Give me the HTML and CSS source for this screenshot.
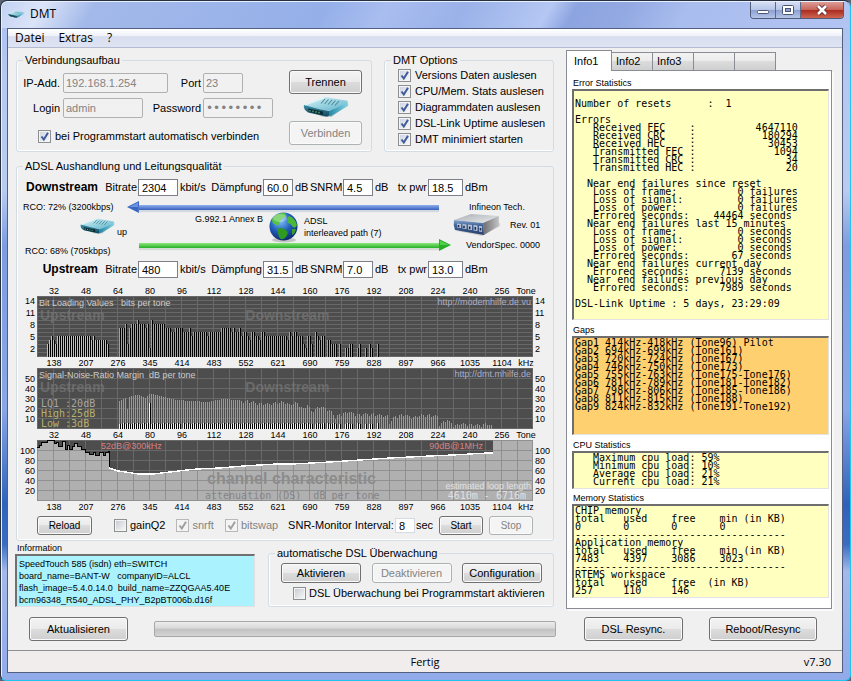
FILE: index.html
```html
<!DOCTYPE html>
<html lang="de">
<head>
<meta charset="utf-8">
<title>DMT</title>
<link rel="stylesheet" href="styles.css">
</head>
<body>
<svg class="defs" width="0" height="0" aria-hidden="true">
  <defs>
    <linearGradient id="teal-top" x1="0" y1="0" x2="1" y2="1"><stop offset="0" stop-color="#e2f7fb"/><stop offset=".5" stop-color="#9bd4e2"/><stop offset="1" stop-color="#5bb2ca"/></linearGradient>
    <linearGradient id="teal-front" x1="0" y1="0" x2="0" y2="1"><stop offset="0" stop-color="#3b8ba3"/><stop offset="1" stop-color="#0f4a5e"/></linearGradient>
    <linearGradient id="teal-side" x1="0" y1="0" x2="1" y2="0"><stop offset="0" stop-color="#2487a6"/><stop offset="1" stop-color="#8ad6e4"/></linearGradient>
    <linearGradient id="grey-top" x1="0" y1="0" x2="1" y2="1"><stop offset="0" stop-color="#a9adb2"/><stop offset="1" stop-color="#eceef0"/></linearGradient>
    <linearGradient id="grey-side" x1="0" y1="0" x2="1" y2="0"><stop offset="0" stop-color="#6d6d70"/><stop offset="1" stop-color="#c9c9cb"/></linearGradient>
    <linearGradient id="navy" x1="0" y1="0" x2="0" y2="1"><stop offset="0" stop-color="#8ea9cf"/><stop offset=".35" stop-color="#41649b"/><stop offset="1" stop-color="#27406c"/></linearGradient>
    <radialGradient id="sea" cx=".4" cy=".3" r=".75"><stop offset="0" stop-color="#7fc4f5"/><stop offset=".5" stop-color="#2360bd"/><stop offset="1" stop-color="#0b2568"/></radialGradient>
    <symbol id="router" viewBox="0 0 46 21">
      <path d="M3 13 20 20H29L45 7V5L28 18Z" fill="#000" opacity=".15"/>
      <path d="M1 8 20 0.5Q22 0 25 .4L43 3.5Q46 4 44 6L29 13Q27 14 24 13.500L2 10Z" fill="url(#teal-top)"/>
      <path d="M1 8Q0 10 2 13L5 15.500 23 19.500Q26 20 26 18V14Q14 12 1 8Z" fill="url(#teal-front)"/>
      <path d="M26 14Q28 13.500 44 5.500Q46 6 45 9L29 18.500Q26 20 26 18Z" fill="url(#teal-side)"/>
      <path d="M5 11.500 20 14.500V18L6 15Z" fill="#082c38"/>
      <path d="M7 13V14.500M10 13.600V15.200M13 14.200V15.800M16 14.800V16.400" stroke="#7fd08a" stroke-width="1"/>
      <path d="M22 2 18 6.500M25.500 2.500 21.500 7M29 3 25 7.500M32.500 3.500 28.500 8M36 4 32 8.500" stroke="#4f8796" stroke-width="1.100"/>
      <path d="M2 8 21 1" stroke="#f2ffff" stroke-width=".8"/>
    </symbol>
  </defs>
</svg>

<div class="window">
  <header class="titlebar">
    <svg class="title-icon" width="16" height="9"><use href="#router"/></svg>
    <span class="title-text">DMT</span>
    <div class="caption">
      <button type="button" class="cap" aria-label="Minimieren"><svg width="14" height="12" viewBox="0 0 14 12"><rect x="1.500" y="6.500" width="11" height="3" rx="1" fill="#fff" stroke="#4b5570"/></svg></button>
      <button type="button" class="cap" aria-label="Maximieren"><svg width="14" height="12" viewBox="0 0 14 12"><rect x="1.500" y="1.500" width="11" height="9" rx="1" fill="#fff" stroke="#4b5570"/><rect x="4.500" y="4.500" width="5" height="3" fill="#8ea4d4" stroke="#4b5570"/></svg></button>
      <button type="button" class="cap cap-close" aria-label="Schließen"><svg width="14" height="12" viewBox="0 0 14 12"><path d="M3 2 11 10M11 2 3 10" stroke="#5a2a30" stroke-width="4.500"/><path d="M3 2 11 10M11 2 3 10" stroke="#fff" stroke-width="2.600"/></svg></button>
    </div>
  </header>

  <div class="client">
    <nav class="menubar">
      <a href="#datei">Datei</a><a href="#extras">Extras</a><a href="#hilfe">?</a>
    </nav>

    <main class="workspace">
      <section class="left">
        <div class="top-groups">
          <fieldset class="group connect">
            <legend>Verbindungsaufbau</legend>
            <div class="connect-form">
              <div class="field-row"><label class="first" for="ip">IP-Add.</label><input class="text w-ip" id="ip" value="192.168.1.254" disabled><label class="second port" for="port">Port</label><input class="text w-port" id="port" value="23" disabled></div>
              <div class="field-row"><label class="first" for="login">Login</label><input class="text w-login" id="login" value="admin" disabled><label class="second" for="pw">Password</label><input class="text w-pw" id="pw" type="password" value="abcdefgh" disabled></div>
              <div class="auto-row"><input type="checkbox" id="auto" checked><label for="auto">bei Programmstart automatisch verbinden</label></div>
            </div>
            <div class="connect-actions">
              <button type="button" class="btn">Trennen</button>
              <svg width="46" height="21" aria-hidden="true"><use href="#router"/></svg>
              <button type="button" class="btn" disabled>Verbinden</button>
            </div>
          </fieldset>
          <fieldset class="group options">
            <legend>DMT Options</legend>
            <div><input type="checkbox" id="o1" checked><label for="o1">Versions Daten auslesen</label></div>
            <div><input type="checkbox" id="o2" checked><label for="o2">CPU/Mem. Stats auslesen</label></div>
            <div><input type="checkbox" id="o3" checked><label for="o3">Diagrammdaten auslesen</label></div>
            <div><input type="checkbox" id="o4" checked><label for="o4">DSL-Link Uptime auslesen</label></div>
            <div><input type="checkbox" id="o5" checked><label for="o5">DMT minimiert starten</label></div>
          </fieldset>
        </div>

        <fieldset class="group adsl">
          <legend>ADSL Aushandlung und Leitungsqualität</legend>
          <div class="rates">
            <b>Downstream</b><label for="dr">Bitrate</label><input id="dr" value="2304"><span>kbit/s</span><label for="da">Dämpfung</label><input id="da" value="60.0"><span>dB</span><label for="ds">SNRM</label><input id="ds" value="4.5"><span>dB</span><label for="dp">tx pwr</label><input id="dp" value="18.5"><span>dBm</span>
          </div>
          <div class="link">
            <div class="near">
              <span>RCO: 72% (3200kbps)</span>
              <div class="near-dev"><svg width="46" height="21" aria-hidden="true"><use href="#router"/></svg><span>up</span></div>
              <span class="rco-up">RCO: 68% (705kbps)</span>
            </div>
            <div class="line">
              <div class="arrow down">
                <svg class="head" width="12" height="12" viewBox="0 0 12 12"><path d="M0 6 12 0V12Z" fill="#3a66c4"/><path d="M2 6 11 1.500V6Z" fill="#6c92e0"/></svg><i></i>
              </div>
              <div class="line-info">
                <span class="annex">G.992.1 Annex B</span>
                <svg width="29" height="31" viewBox="0 0 29 31" aria-hidden="true"><ellipse cx="15" cy="28" rx="12" ry="2.500" fill="#000" opacity=".18"/><circle cx="14.500" cy="14.500" r="14" fill="url(#sea)"/><path d="M3 7Q8 0 15 1Q19 2 16 5Q13 5 13 8Q9 9 10 12Q7 15 6 12Q3 12 3 7Z" fill="#56c440"/><path d="M8 17Q13 14 18 19Q20 22 16 26Q12 29 10 25Q9 21 8 17Z" fill="#2f9a22"/><path d="M20 4Q26 6 28 13Q26 18 23 14Q21 11 19 11Q17 7 20 4Z" fill="#4bb83a"/><path d="M23 17 27 17Q26 22 23 23Z" fill="#37a02c"/><ellipse cx="11" cy="6" rx="7" ry="4" fill="#fff" opacity=".3"/></svg>
                <span class="path">ADSL<br>interleaved path (7)</span>
              </div>
              <div class="arrow up">
                <i></i><svg class="head" width="12" height="12" viewBox="0 0 12 12"><path d="M12 6 0 0V12Z" fill="#27ae27"/><path d="M10 6 1 1.500V6Z" fill="#4fcf4a"/></svg>
              </div>
            </div>
            <div class="far">
              <span class="vendor">Infineon Tech.</span>
              <div class="far-dev">
                <svg width="48" height="22" viewBox="0 0 48 22" aria-hidden="true"><path d="M4 17 29 22 47 12 40 10Z" fill="#000" opacity=".15"/><path d="M1 6 18 0 46 2 30 9Z" fill="url(#grey-top)"/><path d="M30 9 46 2Q45 7 47 11L31 21Z" fill="url(#grey-side)"/><path d="M1 6 30 9 31 21 2 16Q0 11 1 6Z" fill="url(#navy)"/><path d="M4 9.500 8 10V14L4 13.500ZM9.500 10 13.500 10.500V15L9.500 14.500ZM15 10.500 19 11V16L15 15.500ZM20.500 11 24.500 11.500V17L20.500 16.500ZM26 12 29 12.300V18L26 17.500Z" fill="#b7c3d6"/><path d="M5.500 11V13M11 11.700V14M16.700 12.500V15M22.300 13V15.700M27.500 14V16.500" stroke="#1b2b49" stroke-width="1.600"/></svg>
                <span>Rev. 01</span>
              </div>
              <span class="spec">VendorSpec. 0000</span>
            </div>
          </div>
          <div class="rates">
            <b>Upstream</b><label for="ur">Bitrate</label><input id="ur" value="480"><span>kbit/s</span><label for="ua">Dämpfung</label><input id="ua" value="31.5"><span>dB</span><label for="us">SNRM</label><input id="us" value="7.0"><span>dB</span><label for="up">tx pwr</label><input id="up" value="13.0"><span>dBm</span>
          </div>

          <div class="charts">
            <div class="axis tones"></div>
            <div class="scale bits">14<br>11<br>8<br>5<br>2</div>
            <div class="plot" id="bits">
              <span class="cap-l">Bit Loading Values&nbsp;&nbsp; bits per tone</span><span class="cap-r">http://modemhilfe.de.vu</span>
              <b class="mark mark-up">Upstream</b><b class="mark mark-down">Downstream</b>
            </div>
            <div class="scale bits right">14<br>11<br>8<br>5<br>2</div>
            <div class="axis khz"></div>
            <div class="scale snr">50<br>40<br>30<br>20<br>10</div>
            <div class="plot" id="snr">
              <span class="cap-l">Signal-Noise-Ratio Margin&nbsp; dB per tone</span><span class="cap-r">http://dmt.mhilfe.de</span>
              <b class="mark mark-up">Upstream</b><b class="mark mark-down">Downstream</b>
              <pre class="quality"><span>LQ1 :20dB</span>
High:25dB
Low :3dB</pre>
            </div>
            <div class="scale snr right">50<br>40<br>30<br>20<br>10</div>
            <div class="axis tones"></div>
            <div class="scale snr">100<br>80<br>60<br>40<br>20</div>
            <div class="plot" id="att">
              <span class="db db-a">52dB@300kHz</span><span class="db db-b">90dB@1MHz</span>
              <b class="mark channel">channel characteristic</b><span class="atten">attenuation (DS)&nbsp; dB per tone</span>
              <span class="loop">estimated loop length</span><span class="loop-len">4610m - 6716m</span>
            </div>
            <div class="scale snr right">100<br>80<br>60<br>40<br>20</div>
            <div class="axis khz"></div>
          </div>

          <div class="chart-tools">
            <button type="button" class="btn small">Reload</button>
            <div class="check gain"><input type="checkbox" id="gain"><label for="gain">gainQ2</label></div>
            <div class="check snrft"><input type="checkbox" id="snrft" checked disabled><label for="snrft">snrft</label></div>
            <div class="check"><input type="checkbox" id="bitswap" checked disabled><label for="bitswap">bitswap</label></div>
            <div class="interval"><label for="iv">SNR-Monitor Interval:</label><input id="iv" value="8"><span>sec</span></div>
            <button type="button" class="btn small narrow">Start</button>
            <button type="button" class="btn small narrow" disabled>Stop</button>
          </div>
        </fieldset>

        <div class="bottom-groups">
          <div class="info">
            <h2>Information</h2>
            <div class="info-box">SpeedTouch 585 (isdn) eth=SWITCH<br>board_name=BANT-W&nbsp;&nbsp; companyID=ALCL<br>flash_image=5.4.0.14.0&nbsp; build_name=ZZQGAA5.40E<br>bcm96348_R540_ADSL_PHY_B2pBT006b.d16f</div>
          </div>
          <fieldset class="group watch">
            <legend>automatische DSL Überwachung</legend>
            <div class="watch-buttons"><button type="button" class="btn">Aktivieren</button><button type="button" class="btn" disabled>Deaktivieren</button><button type="button" class="btn">Configuration</button></div>
            <div class="watch-check"><input type="checkbox" id="w"><label for="w">DSL Überwachung bei Programmstart aktivieren</label></div>
          </fieldset>
        </div>
      </section>

      <section class="right-side">
        <div class="tabs" role="tablist">
          <button type="button" role="tab" aria-selected="true">Info1</button><button type="button" role="tab">Info2</button><button type="button" role="tab">Info3</button><button type="button" role="tab" aria-label="leer"></button><button type="button" role="tab" aria-label="leer"></button>
        </div>
        <div class="panel">
          <h2>Error Statistics</h2>
<pre class="readout errors">

Number of resets      :  1

Errors
   Received FEC    :          4647110
   Received CRC    :           180294
   Received HEC    :            30453
   Transmitted FEC :             1094
   Transmitted CRC :               34
   Transmitted HEC :               20

  Near end failures since reset
   Loss of frame:          0 failures
   Loss of signal:         0 failures
   Loss of power:          0 failures
   Errored seconds:    44464 seconds
  Near end failures last 15 minutes
   Loss of frame:          0 seconds
   Loss of signal:         0 seconds
   Loss of power:          0 seconds
   Errored seconds:       67 seconds
  Near end failures current day
   Errored seconds:     7139 seconds
  Near end failures previous day
   Errored seconds:     7989 seconds

DSL-Link Uptime : 5 days, 23:29:09</pre>
          <h2>Gaps</h2>
<pre class="readout gaps">Gap1 414kHz-418kHz (Tone96) Pilot
Gap2 694kHz-699kHz (Tone161)
Gap3 720kHz-724kHz (Tone167)
Gap4 746kHz-750kHz (Tone173)
Gap5 755kHz-763kHz (Tone175-Tone176)
Gap6 781kHz-789kHz (Tone181-Tone182)
Gap7 798kHz-806kHz (Tone185-Tone186)
Gap8 811kHz-815kHz (Tone188)
Gap9 824kHz-832kHz (Tone191-Tone192)</pre>
          <h2>CPU Statistics</h2>
<pre class="readout cpu">   Maximum cpu load: 59%
   Minimum cpu load: 10%
   Average cpu load: 21%
   Current cpu load: 21%</pre>
          <h2>Memory Statistics</h2>
<pre class="readout memory">CHIP memory
total   used    free    min (in KB)
0       0       0       0
-----------------------------------
Application memory
total   used    free    min (in KB)
7483    4397    3086    3023
-----------------------------------
RTEMS workspace
total   used    free  (in KB)
257     110     146</pre>
        </div>
      </section>

      <div class="foot-left"><button type="button" class="btn">Aktualisieren</button><div class="progress" role="progressbar" aria-label="Fortschritt"></div></div>
      <div class="foot-right"><button type="button" class="btn">DSL Resync.</button><button type="button" class="btn">Reboot/Resync</button></div>
    </main>

    <footer class="status"><span></span><span>Fertig</span><span class="version">v7.30</span></footer>
  </div>
</div>
<script src="charts.js"></script>
</body>
</html>
```

FILE: styles.css
```css
* { box-sizing: border-box; }

body {
  margin: 0;
  background: #5b6473;
  color: #000;
  font: 11px/13px "Liberation Sans", Arial, sans-serif;
}

.defs { position: absolute; }

input, button { font: inherit; margin: 0; }
h2 { margin: 0; font-size: 9px; line-height: 12px; font-weight: normal; }
pre { margin: 0; }
label, span, legend { white-space: nowrap; }

/* window frame */
.window {
  display: flex;
  flex-direction: column;
  min-height: 100vh;
  padding: 0 7px 7px 6px;
  border: 1px solid #27303f;
  border-right-color: #1fc4f0;
  border-bottom-color: #1fc4f0;
  border-radius: 7px 7px 6px 6px;
  background: linear-gradient(180deg, #a9bfee 0, #b4c8f2 10%, #b9cbf0 28%, #7d9de0 36%, #8aa6e6 60%, #2f63bb 74%, #3a6cc2 80%, #a4b9ea 84%, #91abea 100%);
  box-shadow: inset 1px 1px 0 #e8f0ff;
}

.titlebar {
  display: flex;
  align-items: flex-start;
  height: 26px;
  margin: 1px -6px 0 -5px;
  padding: 0 5px 0 6px;
  border-radius: 6px 6px 0 0;
  background: linear-gradient(120deg, #c3d2f3 0, #dbe4f8 5%, #a3b9ea 11%, #95b0e9 38%, #a9bdf0 45%, #9ab2e9 54%, #b5c7f3 64%, #8ca4e0 67%, #93a9e2 73%, #a9bdee 80%, #b2c4f2 100%);
}
.title-icon { margin-top: 8px; }
.title-text { margin: 3px auto 0 6px; font: 12px/18px "Open Sans", sans-serif; }

.caption { display: flex; height: 17px; border: 1px solid #4f5b78; border-top: 0; border-radius: 0 0 4px 4px; overflow: hidden; }
.cap { display: grid; place-items: center; width: 25px; padding: 0; border: 0; border-right: 1px solid #5c6988; background: linear-gradient(#d5def3, #b6c5e8 48%, #8b9fd0 50%, #b4c4e9); }
.cap-close { width: 42px; border: 0; background: linear-gradient(#dd9d94, #c8655a 48%, #a92a1c 50%, #cf6551); }

.client { flex: 1; display: flex; flex-direction: column; border: 1px solid #51607f; background: #f0f0f0; }

.menubar { display: flex; gap: 14px; height: 19px; padding-left: 7px; border-bottom: 1px solid #b4bbd2; background: linear-gradient(#fff, #eef1f9 40%, #d8deef 42%, #dfe4f3); }
.menubar a { font: 12px/18px "Open Sans", sans-serif; color: #000; text-decoration: none; }

.workspace { flex: 1; display: grid; grid-template-columns: minmax(0, 1fr) 266px; grid-template-rows: auto auto; align-content: start; column-gap: 12px; padding: 2px 10px 0 8px; }
.left { padding-top: 4px; }

/* groups */
.group { min-width: 0; margin: 0; padding: 0; border: 1px solid #d3dce2; border-radius: 3px; box-shadow: inset 1px 0 #fff, inset 0 -1px #fff; }
.group legend { margin-left: 6px; padding: 0 2px; line-height: 13px; }

.top-groups { display: flex; gap: 12px; }
.connect { flex: 1; display: flex; justify-content: space-between; height: 98px; }
.connect-form { padding-top: 6px; }
.field-row { display: flex; align-items: center; width: 256px; height: 20px; margin-bottom: 5px; }
.field-row:first-child { width: 226px; }
.first { width: 43px; margin-right: 3px; text-align: right; }
.second { margin: 0 2px 0 auto; }
.text { height: 20px; padding: 0 2px; border: 1px solid #b0b0b0; border-radius: 2px; background: #f1f1f1; color: #838383; }
.w-ip { width: 105px; }
.w-port { width: 40px; }
.w-login { width: 80px; }
.w-pw { width: 70px; font: 12px/16px "DejaVu Sans", sans-serif; }
.auto-row { display: flex; align-items: center; gap: 4px; margin: 12px 0 0 21px; }
.connect-actions { display: flex; flex-direction: column; align-items: center; justify-content: space-between; width: 73px; margin: 3px 9px 6px 0; }
.connect-actions .btn { width: 100%; height: 24px; }

.options { width: 170px; height: 98px; }
.options div { display: flex; align-items: center; gap: 4px; height: 16px; margin-left: 13px; }

input[type="checkbox"] {
  appearance: none;
  flex: none;
  width: 13px;
  height: 13px;
  border: 1px solid #8e8f8f;
  background: linear-gradient(135deg, #c9cdd3, #f6f6f6) content-box, #f4f4f4;
  padding: 1px;
}
input[type="checkbox"]:checked {
  background: url("data:image/svg+xml,%3Csvg xmlns='http://www.w3.org/2000/svg' width='11' height='11'%3E%3Cpath d='M2.500 5.500 4.800 8.500 9 1.800' fill='none' stroke='%23405a9c' stroke-width='2'/%3E%3C/svg%3E") center no-repeat padding-box, linear-gradient(135deg, #cfd6e4, #f6f6f6) content-box, #f4f4f4;
}
input[type="checkbox"]:disabled {
  border-color: #b8b8b8;
  background: url("data:image/svg+xml,%3Csvg xmlns='http://www.w3.org/2000/svg' width='11' height='11'%3E%3Cpath d='M2.500 5.500 4.800 8.500 9 1.800' fill='none' stroke='%23a0a0a0' stroke-width='2'/%3E%3C/svg%3E") center no-repeat padding-box, #f4f4f4;
}
input:disabled + label { color: #838383; }
.field-row input:disabled + label { color: #000; }

.btn {
  padding: 0;
  border: 1px solid #707070;
  border-radius: 3px;
  background: linear-gradient(#f3f3f3, #ebebeb 48%, #dcdcdc 50%, #cfcfcf);
  box-shadow: inset 0 0 0 1px #fafafa;
  color: #000;
  white-space: nowrap;
}
.btn:disabled { border-color: #adb2b5; background: #f4f4f4; color: #838383; }

/* ADSL group */
.adsl { height: 381px; margin-top: 8px; }
.rates { display: grid; grid-template-columns: 81px 40px 40px 27px 58px 30px 17px 33px 30px 17px 38px 35px 1fr; align-items: center; height: 17px; margin-top: 6px; }
.rates b { text-align: right; font-size: 12px; }
.rates label { text-align: right; padding-right: 1px; }
.rates span { padding-left: 2px; }
.rates input, .interval input { width: 100%; height: 17px; padding: 0 3px; border: 1px solid #7d7f88; background: #fff; color: #000; }

.link { display: grid; grid-template-columns: 110px minmax(0, 1fr) 102px; height: 59px; font-size: 9px; line-height: 12px; }
.near { display: flex; flex-direction: column; padding: 5px 0 0 6px; }
.near-dev { display: flex; align-items: flex-end; gap: 2px; margin: 3px 0 0 57px; }
.near-dev span { line-height: 10px; }
.rco-up { margin: 8px 0 0 2px; }
.line { display: flex; flex-direction: column; }
.arrow { display: flex; align-items: center; height: 12px; }
.arrow i { flex: 1; height: 5px; }
.down { margin: 5px 12px 0 0; }
.down i { background: linear-gradient(#8fb0ee, #3560bd); box-shadow: 0 2px 1px #d4d8e0; }
.up { margin: 0 0 0 12px; }
.up i { background: linear-gradient(#8be87c, #27b027); box-shadow: 0 2px 1px #d4ddd4; }
.line-info { display: grid; grid-template-columns: 136px 29px 1fr; column-gap: 6px; height: 26px; }
.line-info svg { margin-top: -1px; }
.annex { text-align: right; }
.path { padding-top: 2px; }
.far { display: flex; flex-direction: column; }
.vendor { margin: 5px 0 0 18px; }
.far-dev { display: flex; align-items: center; gap: 9px; margin-left: 2px; height: 24px; }
.spec { margin: 2px 0 0 15px; }

.charts { display: grid; grid-template-columns: 20px minmax(0, 1fr) 20px; grid-template-rows: 11px 61px 11px 61px 11px 61px 11px; margin-top: 7px; font-size: 9px; }
.axis { grid-column: 2; display: grid; grid-template-columns: repeat(15, minmax(0, 2fr)) minmax(0, 1fr); line-height: 13px; }
.axis span { display: flex; justify-content: center; padding-left: 2px; }
.scale { grid-column: 1; padding-right: 2px; text-align: right; }
.scale.right { grid-column: 3; padding-right: 0; padding-left: 2px; text-align: left; }
.bits { line-height: 12px; margin-top: -1px; }
.snr { line-height: 10px; padding-top: 6px; }

.plot { grid-column: 2; position: relative; overflow: hidden; background: #4d4d4d; line-height: 10px; }
.plot svg { display: block; width: 496px; min-width: 100%; height: 61px; }
.plot span, .plot b, .plot pre { position: absolute; z-index: 1; }
.cap-l { left: 2px; top: 2px; color: #ccc; }
.cap-r { right: 2px; top: 1px; color: #a9aecb; }
.mark { color: #777; font-size: 14px; line-height: 16px; opacity: .7; }
.mark-up { left: 3px; top: 11px; }
.mark-down { left: 42%; top: 11px; }
.quality { left: 4px; top: 31px; font: 10px/10px "DejaVu Sans Mono", monospace; color: #b4b070; }
.plot .quality span { position: static; color: #a5a5a5; }
.db { top: 1px; color: #d98080; }
.db-a { left: 64px; }
.db-b { right: 50px; }
.plot .channel { left: 170px; top: 31px; color: #8c8c8c; font-size: 16px; opacity: 1; white-space: nowrap; }
.atten { left: 168px; top: 51px; font: 10px/10px "DejaVu Sans Mono", monospace; color: #858585; }
.loop { right: 2px; top: 41px; color: #e0e0e0; }
.loop-len { right: 7px; top: 51px; font: 10px/10px "DejaVu Sans Mono", monospace; color: #e0e0e0; }

.chart-tools { display: flex; align-items: center; height: 19px; margin: 4px 20px 0; }
.small { height: 19px; width: 55px; font-size: 10px; }
.narrow { width: 44px; margin-left: 6px; }
.check, .interval { display: flex; align-items: center; gap: 3px; }
.gain { margin: 0 11px 0 22px; }
.snrft { margin-right: 11px; }
.interval { margin-left: auto; gap: 1px; }
.interval input { width: 20px; height: 15px; border-color: #d5dae0; }

/* bottom */
.bottom-groups { display: flex; gap: 13px; }
.info { width: 240px; margin-left: -1px; padding-top: 1px; }
.info h2 { padding-left: 2px; }
.info-box { height: 53px; padding: 2px; border: 1px solid #e0e0e0; border-top: 2px solid #707070; border-left: 2px solid #707070; background: #aaf2fd; font-size: 9px; line-height: 12px; white-space: nowrap; }
.watch { flex: 1; height: 60px; margin-top: 6px; }
.watch-buttons { display: flex; justify-content: space-between; margin: 3px 11px 0 12px; }
.watch-buttons .btn { width: 80px; height: 20px; }
.watch-check { display: flex; align-items: center; gap: 3px; margin: 4px 0 0 24px; }

/* tabs */
.tabs { display: flex; align-items: flex-end; height: 20px; }
.tabs button { width: 41px; height: 18px; padding: 0 0 0 4px; border: 1px solid #898c95; border-bottom: 0; border-left-width: 0; background: linear-gradient(#f2f2f2, #ebebeb 48%, #dcdcdc 50%, #cfcfcf); text-align: left; }
.tabs button[aria-selected="true"] { width: 46px; height: 21px; margin-bottom: -1px; padding-left: 7px; border-left-width: 1px; background: #fff; z-index: 1; }
.panel { min-height: 539px; padding: 6px 2px 8px 5px; border: 1px solid #898c95; background: #fff; box-shadow: 2px 2px 0 #fafafa; }
.panel h2 { padding-left: 1px; }
.readout { overflow: hidden; padding: 1px 0 0 1px; border: 1px solid #e3e3e3; border-top: 2px solid #6e6e6e; border-left: 2px solid #6e6e6e; background: #ffffc0; font: 10px/8px "DejaVu Sans Mono", monospace; }
.errors { height: 231px; margin-bottom: 4px; }
.gaps { height: 99px; margin-bottom: 4px; background: #ffd070; }
.cpu { height: 38px; margin-bottom: 3px; }
.memory { height: 94px; }

.foot-left { display: flex; align-items: center; padding: 8px 0 0 13px; gap: 26px; }
.foot-left .btn { width: 99px; height: 24px; }
.progress { flex: 1; height: 16px; margin-right: -2px; border: 1px solid #a8a8a8; border-radius: 2px; background: linear-gradient(#ececec, #d8d8d8 45%, #c2c2c2 50%, #d4d4d4); }
.foot-right { display: flex; justify-content: space-between; padding: 8px 15px 0 18px; }
.foot-right .btn { width: 108px; height: 24px; }
.foot-right .btn:first-child { width: 99px; }

.status { display: grid; grid-template-columns: 1fr auto 1fr; align-items: center; height: 22px; padding: 0 11px; border-top: 1px solid #8f8f8f; background: #f1eded; font: 11px/20px "Open Sans", sans-serif; }
.version { text-align: right; }
```

FILE: charts.js
```js
const W = 496, H = 61;
const FIRST_DOWN = 82;

/* axis labels */
const fill = (sel, values, unit) => document.querySelectorAll(sel).forEach(el => {
  el.innerHTML = [...values, unit].map(v => `<span>${v}</span>`).join('');
});
const steps = [...Array(15).keys()];
fill('.tones', steps.map(i => 32 + i * 16), 'Tone');
fill('.khz', steps.map(i => 138 + i * 69), 'kHz');

const rect = (x, y, w, h, c) => `<rect x="${x}" y="${y}" width="${w}" height="${h}" fill="${c}"/>`;
function grid(dy, color) {
  let s = '';
  for (let y = H - 1 - dy; y > 0; y -= dy) s += rect(0, y, W, 1, color);
  for (let x = 16; x < W; x += 16) s += rect(x, 0, 1, H, color);
  return s + `<rect x=".5" y=".5" width="${W - 1}" height="${H - 1}" fill="none" stroke="${color}"/>`;
}
function draw(id, body) {
  document.getElementById(id).insertAdjacentHTML('afterbegin',
    `<svg viewBox="0 0 ${W} ${H}" preserveAspectRatio="none" shape-rendering="crispEdges">${body}</svg>`);
}

/* bits per tone */
const up = '345435555555555555555545444444' + '3';
const down = '77783788898887829888888777667777666756666666566666677777676675665466554665555555555546566555325530654550443330300223300230020320' + '03';
let s = grid(4, '#686868');
const bars = (str, x0, color) => [...str].forEach((d, i) => {
  if (d === '0') return;
  const h = d * 4 + 1, x = x0 + i * 2;
  s += rect(x, H - h, 1, h, x === FIRST_DOWN + 62 ? '#e05050' : color) + rect(x + 1, H - h, 1, h, '#000');
});
bars(up, 10, '#8fe08f');
bars(down, FIRST_DOWN, '#86a4ea');
draw('bits', s);

/* SNR margin: [tone index, dB] */
const snr = [[0,28],[3,31],[4,20],[5,32],[8,34],[10,34],[13,31],[15,35],[19,34],[24,31],[29,29],[36,28],[44,27],[52,30],[59,29],[66,27],[72,25],[79,26],[83,27],[85,24],[89,26],[92,20],[94,24],[96,18],[100,22],[103,21],[105,19],[107,15],[108,10],[110,15],[115,17],[120,14],[124,15],[130,14],[134,13],[135,6],[138,13],[142,14],[147,12],[152,14],[159,13],[160,5],[164,9],[167,4],[172,5],[179,4],[184,5],[186,3]];
const at = (pts, x) => {
  const k = Math.max(1, pts.findIndex(p => p[0] >= x)), [a, b] = [pts[k - 1], pts[k]];
  return a[1] + (b[1] - a[1]) * (x - a[0]) / (b[0] - a[0]);
};
s = grid(10, '#686868');
for (let i = 0; i <= 186; i++) {
  const wobble = i > 60 ? [0, 1, -1, 0, 1, 0, -2][i % 7] : 0;
  const h = Math.round(at(snr, i)) + wobble, x = FIRST_DOWN + i * 2;
  s += rect(x, H - h, 1, h, '#999');
  if (i < down.length && down[i] !== '0' && i !== 31) {
    const y = i === 15 ? 26 : 5 + (i * 7 % 5 > 2 ? 1 : 0);
    s += rect(x, H - y, 1, y, '#ffff90') + rect(x + 1, H - y, 1, y, '#000');
  }
}
draw('snr', s);

/* channel attenuation */
const noise = [[0,7],[2,5],[4,2],[8,2],[10,0],[15,0],[17,3],[19,2],[21,6],[23,6],[25,1],[28,9],[30,5],[32,9],[35,6],[37,3],[40,6],[44,9],[48,12],[52,14],[54,14],[56,12],[58,15],[62,12],[66,15],[68,12],[71,11],[72,11]];
const curve = [[72,28],[81,31],[89,32],[101,34],[116,34],[133,32],[150,30],[160,29],[183,28],[206,26],[240,24],[256,24],[293,22],[323,20],[353,18],[393,16],[416,15],[450,13],[456,13]];
const ragged = noise.map(([x, y], i) => i ? `H${x} V${y}` : `M0 ${y}`).join(' ');
const rest = curve.map(p => 'L' + p.join(' ')).join(' ');
const area = `${ragged} ${rest} V0 H${W} V${H} H0 Z`;
s = grid(10, '#686868')
  + `<clipPath id="under"><path d="${area}"/></clipPath>`
  + `<g clip-path="url(#under)">${rect(0, 0, W, H, '#b0b0b0')}${grid(10, '#909090')}</g>`
  + `<path d="${ragged} V28" fill="none" stroke="#000" stroke-width="1"/>`
  + `<path d="${'M' + curve.map(p => p.join(' ')).join(' L')}" fill="none" stroke="#fff" stroke-width="1.4"/>`;
draw('att', s);
```
